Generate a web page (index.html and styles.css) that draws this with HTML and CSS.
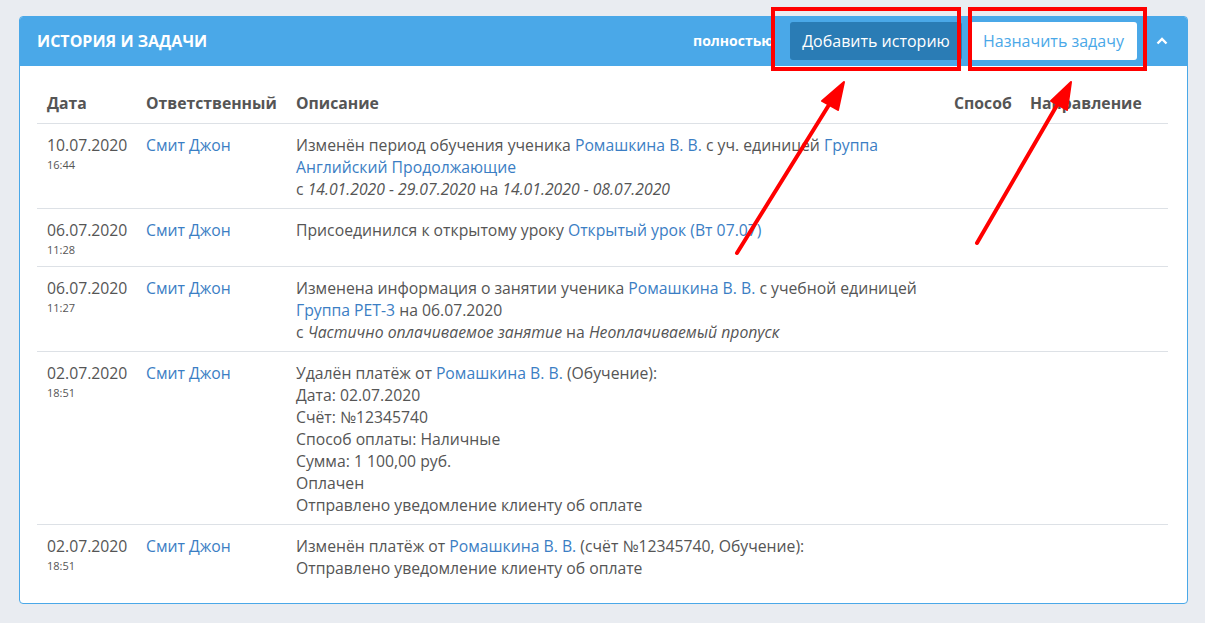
FILE: index.html
```html
<!DOCTYPE html>
<html lang="ru">
<head>
    <meta charset="UTF-8">
    <title>История и задачи</title>
    <link rel="stylesheet" href="styles.css">
</head>
<body>

    <!-- History panel -->
    <div class="panel">
        <div class="panel-header">
            <div class="panel-title">История и задачи</div>
            <div class="panel-tools">
                <span class="show-all">полностью</span>
                <button class="btn btn-dark">Добавить историю</button>
                <button class="btn btn-light">Назначить задачу</button>
                <span class="collapse">
                    <svg width="12" height="8" viewBox="0 0 12 8"><path d="M1.5 6.5 L6 2 L10.5 6.5" fill="none" stroke="#fff" stroke-width="2.4"/></svg>
                </span>
            </div>
        </div>

        <div class="panel-body">
            <table class="history">
                <colgroup>
                    <col style="width:99px">
                    <col style="width:150px">
                    <col style="width:658px">
                    <col style="width:76px">
                    <col style="width:148px">
                </colgroup>
                <thead>
                    <tr>
                        <th>Дата</th>
                        <th>Ответственный</th>
                        <th>Описание</th>
                        <th>Способ</th>
                        <th>Направление</th>
                    </tr>
                </thead>
                <tbody>
                    <tr>
                        <td>10.07.2020<div class="time">16:44</div></td>
                        <td><a href="#">Смит Джон</a></td>
                        <td>Изменён период обучения ученика <a href="#">Ромашкина В. В.</a> с уч. единицей <a href="#">Группа Английский Продолжающие</a><br>с <i>14.01.2020 - 29.07.2020</i> на <i>14.01.2020 - 08.07.2020</i></td>
                        <td></td>
                        <td></td>
                    </tr>
                    <tr>
                        <td>06.07.2020<div class="time">11:28</div></td>
                        <td><a href="#">Смит Джон</a></td>
                        <td>Присоединился к открытому уроку <a href="#">Открытый урок (Вт 07.07)</a></td>
                        <td></td>
                        <td></td>
                    </tr>
                    <tr>
                        <td>06.07.2020<div class="time">11:27</div></td>
                        <td><a href="#">Смит Джон</a></td>
                        <td>Изменена информация о занятии ученика <a href="#">Ромашкина В. В.</a> с учебной единицей <a href="#">Группа PET-3</a> на 06.07.2020<br>с <i>Частично оплачиваемое занятие</i> на <i>Неоплачиваемый пропуск</i></td>
                        <td></td>
                        <td></td>
                    </tr>
                    <tr>
                        <td>02.07.2020<div class="time">18:51</div></td>
                        <td><a href="#">Смит Джон</a></td>
                        <td>Удалён платёж от <a href="#">Ромашкина В. В.</a> (Обучение):<br>Дата: 02.07.2020<br>Счёт: №12345740<br>Способ оплаты: Наличные<br>Сумма: 1 100,00 руб.<br>Оплачен<br>Отправлено уведомление клиенту об оплате</td>
                        <td></td>
                        <td></td>
                    </tr>
                    <tr class="last">
                        <td>02.07.2020<div class="time">18:51</div></td>
                        <td><a href="#">Смит Джон</a></td>
                        <td>Изменён платёж от <a href="#">Ромашкина В. В.</a> (счёт №12345740, Обучение):<br>Отправлено уведомление клиенту об оплате</td>
                        <td></td>
                        <td></td>
                    </tr>
                </tbody>
            </table>
        </div>
    </div>

    <!-- Red markers over the header buttons -->
    <svg class="marks" width="1205" height="623" viewBox="0 0 1205 623">
        <rect x="773" y="9" width="186" height="60" fill="none" stroke="#f00" stroke-width="4"/>
        <rect x="970" y="9" width="175" height="60" fill="none" stroke="#f00" stroke-width="4"/>
        <g stroke="#f00" stroke-width="4" stroke-linecap="round" fill="#f00">
            <line x1="737" y1="253" x2="832" y2="100"/>
            <polygon points="844,82 822,101 838,110" stroke-width="2" stroke-linejoin="round"/>
            <line x1="977" y1="243" x2="1060" y2="100"/>
            <polygon points="1071,82 1051,101 1067,110" stroke-width="2" stroke-linejoin="round"/>
        </g>
    </svg>

</body>
</html>
```

FILE: styles.css
```css
body {
    font-family: "Open Sans", Arial, sans-serif;
    background-color: #e9ecf1;
    margin: 0;
    padding: 16px 17px 0 19px;
    color: #555;
    font-size: 15.75px;
}

.panel {
    background-color: #fff;
    border: 1px solid #4aa8e8;
    border-radius: 4px;
    overflow: hidden;
}

.panel-header {
    background-color: #4aa8e8;
    height: 50px;
    margin-top: -1px;
    display: flex;
    align-items: center;
    justify-content: space-between;
    padding: 0 0 0 17px;
}

.panel-title {
    color: #fff;
    font-weight: 700;
    font-size: 16px;
    text-transform: uppercase;
}

.panel-tools {
    display: flex;
    align-items: center;
}

.show-all {
    color: #fff;
    font-weight: 700;
    font-size: 14px;
    width: 85px;
    overflow: hidden;
    white-space: nowrap;
    margin-right: 12px;
    margin-bottom: 2px;
}

.btn {
    font-family: "Open Sans", Arial, sans-serif;
    font-size: 16px;
    height: 38px;
    border: none;
    border-radius: 3px;
    padding: 0;
    cursor: pointer;
}

.btn-dark {
    background-color: #2a7cb5;
    color: #fff;
    width: 172px;
    margin-right: 8px;
}

.btn-light {
    background-color: #fff;
    color: #4aa8e8;
    width: 167px;
}

.collapse {
    width: 50px;
    display: flex;
    justify-content: center;
}

.panel-body {
    padding: 16px 19px 16px 17px;
}

.history {
    width: 1131px;
    table-layout: fixed;
    border-collapse: collapse;
}

.history th {
    text-align: left;
    font-weight: 700;
    color: #555;
    padding: 10px 10px 9px;
    line-height: 22px;
    border-bottom: 1px solid #dde1e6;
    white-space: nowrap;
}

.history td {
    vertical-align: top;
    padding: 10px 10px 8px;
    line-height: 22px;
    border-bottom: 1px solid #dde1e6;
}

.history tr.last td {
    border-bottom: none;
}

.history a {
    color: #3b7ec4;
    text-decoration: none;
}

.time {
    font-size: 11px;
    line-height: 17px;
}

.marks {
    position: absolute;
    top: 0;
    left: 0;
    pointer-events: none;
}
```
